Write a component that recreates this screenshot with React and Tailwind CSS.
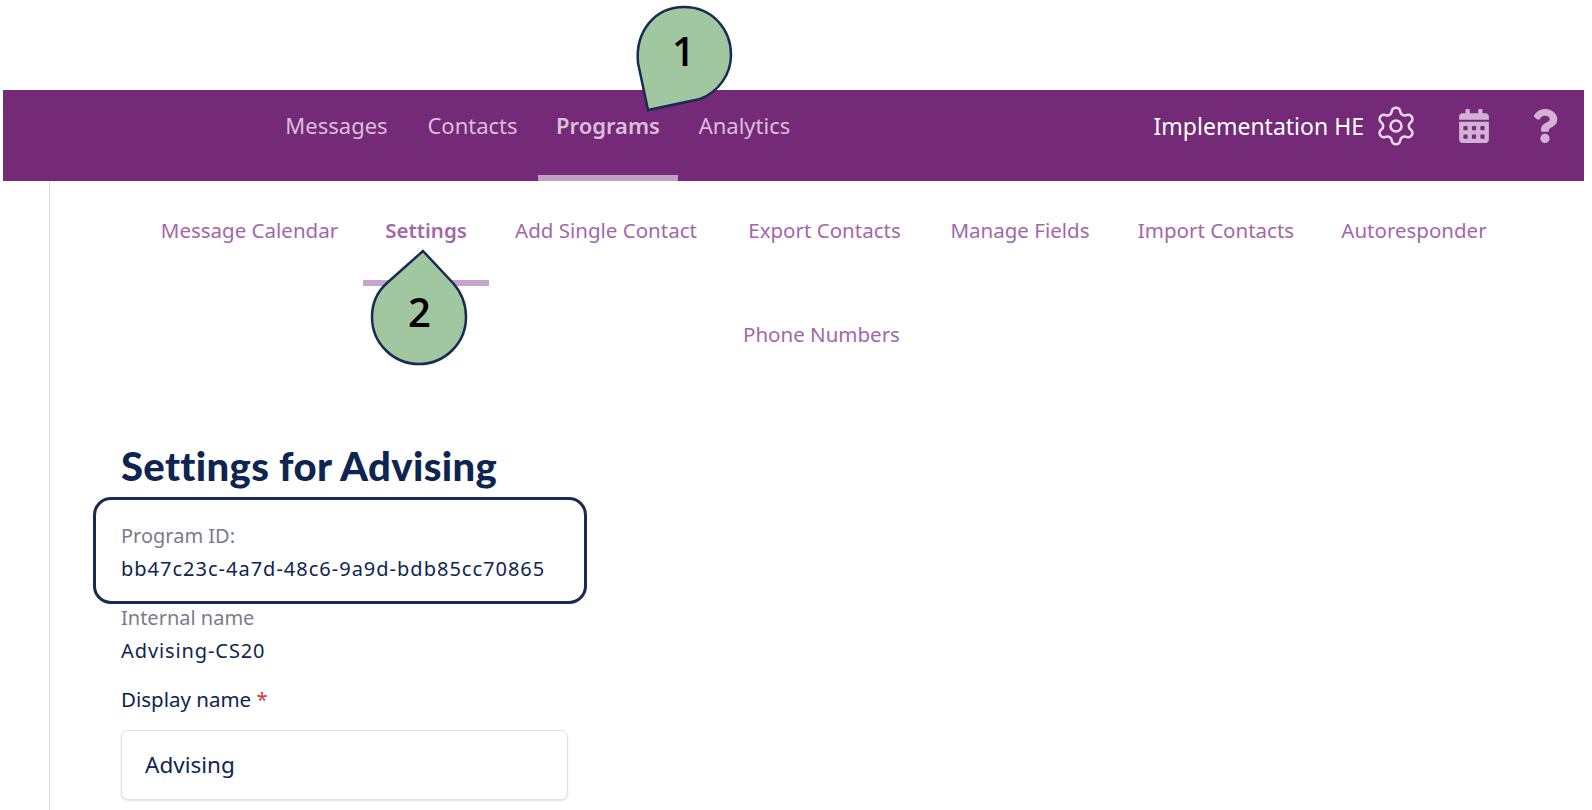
import React from "react";
import { Settings } from "lucide-react";
import { FaCalendarAlt, FaQuestion } from "react-icons/fa";

const sans = "font-['Noto_Sans','Open_Sans',sans-serif]";

function NavLink({ children, active, className = "" }) {
  return (
    <a className={`relative flex h-full items-center justify-center pb-[20px] text-[#d8bfda] ${active ? "font-semibold" : ""} ${className}`}>
      {children}
      {active && <span className="absolute bottom-0 left-0 right-0 h-[6px] bg-[#c2a0c6]" />}
    </a>
  );
}

function SubLink({ children, active, className = "" }) {
  return (
    <a className={`relative flex h-[103px] items-start justify-center text-[#a267aa] ${active ? "font-semibold" : ""} ${className}`}>
      {children}
      {active && <span className="absolute left-0 right-0 top-[99px] h-[6px] bg-[#c7a4cc]" />}
    </a>
  );
}

function Drop({ n, className, path, tx, ty, w, h }) {
  return (
    <div className={`absolute ${className}`}>
      <svg width={w} height={h} viewBox={`0 0 ${w} ${h}`} className="block">
        <path d={path} fill="#a0c79f" stroke="#172b55" strokeWidth="2.5" strokeLinejoin="miter" />
      </svg>
      <span className={`absolute font-['Open_Sans',sans-serif] text-[40px] leading-none font-semibold text-black ${tx} ${ty}`}>{n}</span>
    </div>
  );
}

export default function App() {
  return (
    <div className={`relative h-[810px] w-[1592px] overflow-hidden bg-white ${sans}`}>
      <div className="pl-[3px] pr-[8px] pt-[90px]">
        <header className="flex h-[91px] items-center bg-[#752a78] text-[22px]">
          <nav className="ml-[261px] flex h-full">
            <NavLink className="w-[143px] pl-[21px] pr-[19px]">Messages</NavLink>
            <NavLink className="w-[131px]">Contacts</NavLink>
            <NavLink active className="w-[140px]">Programs</NavLink>
            <NavLink className="w-[133px]">Analytics</NavLink>
          </nav>
          <div className="ml-auto flex h-full items-center pb-[20px]">
            <span className="mr-[10px] mt-[2px] text-[23px] text-white">Implementation HE</span>
            <Settings size={44} strokeWidth={1.4} className="mr-[39px] text-[#e8d8ea]" />
            <FaCalendarAlt size={34} className="mr-[37px] text-[#d3b1d6]" />
            <FaQuestion size={34} className="mr-[22px] text-[#d3b1d6]" />
          </div>
        </header>
        <div className="ml-[46px] flex h-[629px] flex-col border-l border-[#d9d9d9]">
          <div className="flex flex-wrap justify-center pl-[12px] text-[20.5px]">
            <SubLink className="w-[227px] pt-[34px]">Message Calendar</SubLink>
            <SubLink active className="w-[126px] pt-[34px]">Settings</SubLink>
            <SubLink className="w-[234px] pt-[34px]">Add Single Contact</SubLink>
            <SubLink className="w-[203px] pt-[34px]">Export Contacts</SubLink>
            <SubLink className="w-[188px] pt-[34px]">Manage Fields</SubLink>
            <SubLink className="w-[204px] pt-[34px]">Import Contacts</SubLink>
            <SubLink className="w-[192px] pt-[34px]">Autoresponder</SubLink>
            <SubLink className="w-[203px] pt-[35px] pr-[3px]">Phone Numbers</SubLink>
          </div>
          <main className="ml-[71px] mt-[55px] w-[447px]">
            <h1 className="font-['Lato',sans-serif] text-[40px] leading-[48px] font-black tracking-[0.35px] text-[#0e2552]">Settings for Advising</h1>
            <div className="relative mt-[18px]">
              <div className="absolute -left-[28px] -top-[11px] h-[107px] w-[494px] rounded-[18px] border-[3px] border-[#172b55]" />
              <p className="pt-[12px] text-[20px] leading-[32px] text-[#7b7b8a]">Program ID:</p>
              <p className="pt-[1px] text-[20px] leading-[32px] tracking-[1px] text-[#0e2552]">bb47c23c-4a7d-48c6-9a9d-bdb85cc70865</p>
            </div>
            <p className="mt-[17px] text-[20px] leading-[32px] text-[#7b7b8a]">Internal name</p>
            <p className="text-[20px] leading-[34px] tracking-[0.9px] text-[#0e2552]">Advising-CS20</p>
            <p className="mt-[15px] text-[20.5px] leading-[32px] text-[#0e2552]">Display name <span className="text-[#d93a3a]">*</span></p>
            <div className="mt-[15px] flex h-[70px] items-center rounded-[7px] border border-[#e2e2e2] bg-white pl-[23px] text-[22.5px] text-[#0e2552] shadow-[0_1px_2px_rgba(0,0,0,0.12)]">Advising</div>
          </main>
        </div>
      </div>
      <Drop n="1" w={100} h={108} className="left-[634px] top-[5px]" tx="left-[38px]" ty="top-[26px]"
        path="M14 105 L4 58 C1 25 22 2 50 2 C78 2 97 24 97 50 C97 70 84 87 66 94 Z" />
      <Drop n="2" w={100} h={120} className="left-[369px] top-[248px]" tx="left-[39px]" ty="top-[44px]"
        path="M54 3 L84 35 C92 44 97 55 97 69 C97 95 76 116 50 116 C24 116 3 95 3 69 C3 55 9 43 18 35 Z" />
    </div>
  );
}
